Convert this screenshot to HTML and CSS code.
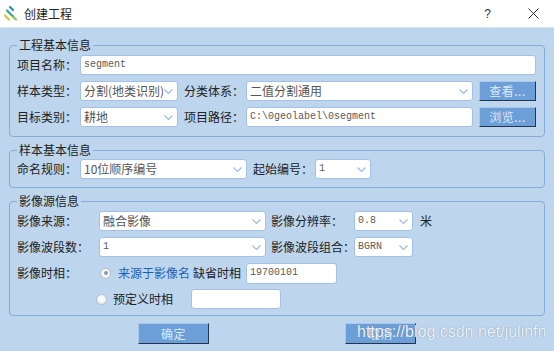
FILE: index.html
```html
<!DOCTYPE html>
<html lang="zh">
<head>
<meta charset="utf-8">
<link rel="stylesheet" href="styles.css">
</head>
<body>
<div class="titlebar">
  <svg class="logo" width="14" height="16" viewBox="0 0 14 16">
    <path d="M6 1 L9 4" stroke="#2a8fb0" stroke-width="2.2" stroke-linecap="round"/>
    <path d="M3 4.5 L9.5 11" stroke="#35a88a" stroke-width="2.2" stroke-linecap="round"/>
    <path d="M1 9.5 L5 13.5" stroke="#d8c23a" stroke-width="2.2" stroke-linecap="round"/>
    <path d="M9 10.5 L12 13.5" stroke="#8cc04a" stroke-width="2" stroke-linecap="round"/>
  </svg>
  <span class="title">创建工程</span>
  <span class="help">?</span>
  <svg class="close" width="11" height="11" viewBox="0 0 11 11">
    <path d="M0.5 0.5 L10.5 10.5 M10.5 0.5 L0.5 10.5" stroke="#333" stroke-width="1"/>
  </svg>
</div>

<div class="main">
  <fieldset class="group g1">
    <legend>工程基本信息</legend>
    <div class="grid grid1">
      <span class="lab">项目名称：</span>
      <div class="field span4"><span class="mono">segment</span></div>

      <span class="lab">样本类型：</span>
      <div class="field combo"><span>分割(地类识别)</span><svg class="chev" width="9" height="5" viewBox="0 0 9 5"><path d="M0.5 0.5 L4.5 4.5 L8.5 0.5" fill="none" stroke="#9cbde2" stroke-width="1.2"/></svg></div>
      <span class="lab lab2">分类体系：</span>
      <div class="field combo"><span>二值分割通用</span><svg class="chev" width="9" height="5" viewBox="0 0 9 5"><path d="M0.5 0.5 L4.5 4.5 L8.5 0.5" fill="none" stroke="#9cbde2" stroke-width="1.2"/></svg></div>
      <div class="btncell"><div class="btn">查看...</div></div>

      <span class="lab">目标类别：</span>
      <div class="field combo"><span>耕地</span><svg class="chev" width="9" height="5" viewBox="0 0 9 5"><path d="M0.5 0.5 L4.5 4.5 L8.5 0.5" fill="none" stroke="#9cbde2" stroke-width="1.2"/></svg></div>
      <span class="lab lab2">项目路径：</span>
      <div class="field"><span class="mono">C:\0geolabel\0segment</span></div>
      <div class="btncell"><div class="btn">浏览...</div></div>
    </div>
  </fieldset>

  <fieldset class="group g2">
    <legend>样本基本信息</legend>
    <div class="grid grid2">
      <span class="lab">命名规则：</span>
      <div class="field combo"><span>10位顺序编号</span><svg class="chev" width="9" height="5" viewBox="0 0 9 5"><path d="M0.5 0.5 L4.5 4.5 L8.5 0.5" fill="none" stroke="#9cbde2" stroke-width="1.2"/></svg></div>
      <span class="lab lab2">起始编号：</span>
      <div class="field combo"><span class="mono">1</span><svg class="chev" width="9" height="5" viewBox="0 0 9 5"><path d="M0.5 0.5 L4.5 4.5 L8.5 0.5" fill="none" stroke="#9cbde2" stroke-width="1.2"/></svg></div>
    </div>
  </fieldset>

  <fieldset class="group g3">
    <legend>影像源信息</legend>
    <div class="grid grid3">
      <span class="lab">影像来源：</span>
      <div class="field combo"><span>融合影像</span><svg class="chev" width="9" height="5" viewBox="0 0 9 5"><path d="M0.5 0.5 L4.5 4.5 L8.5 0.5" fill="none" stroke="#9cbde2" stroke-width="1.2"/></svg></div>
      <span class="lab lab3">影像分辨率：</span>
      <div class="field combo"><span class="mono">0.8</span><svg class="chev" width="9" height="5" viewBox="0 0 9 5"><path d="M0.5 0.5 L4.5 4.5 L8.5 0.5" fill="none" stroke="#9cbde2" stroke-width="1.2"/></svg></div>
      <span class="lab unit">米</span>

      <span class="lab">影像波段数：</span>
      <div class="field combo"><span class="mono">1</span><svg class="chev" width="9" height="5" viewBox="0 0 9 5"><path d="M0.5 0.5 L4.5 4.5 L8.5 0.5" fill="none" stroke="#9cbde2" stroke-width="1.2"/></svg></div>
      <span class="lab lab3">影像波段组合：</span>
      <div class="field combo"><span class="mono">BGRN</span><svg class="chev" width="9" height="5" viewBox="0 0 9 5"><path d="M0.5 0.5 L4.5 4.5 L8.5 0.5" fill="none" stroke="#9cbde2" stroke-width="1.2"/></svg></div>
      <span></span>

      <span class="lab">影像时相：</span>
      <div class="radiorow r1">
        <span class="radio checked"></span>
        <span class="rtext blue">来源于影像名</span>
        <span class="lab deflab">缺省时相</span>
        <div class="field datein"><span class="mono">19700101</span></div>
      </div>

      <span></span>
      <div class="radiorow r2">
        <span class="radio"></span>
        <span class="rtext">预定义时相</span>
        <div class="field predef"></div>
      </div>
    </div>
  </fieldset>

  <div class="actions">
    <div class="btn big">确定</div>
    <div class="btn big">取消</div>
  </div>
</div>

<div class="watermark">https://blog.csdn.net/julinfn</div>
</body>
</html>
```

FILE: styles.css
```css
* { box-sizing: border-box; }

body {
  margin: 0;
  width: 554px;
  height: 351px;
  overflow: hidden;
  position: relative;
  background: #bdd6ee;
  font-family: "Noto Sans CJK SC", "Liberation Sans", sans-serif;
  font-size: 12px;
  line-height: 14px;
  color: #222;
}

.titlebar {
  height: 28px;
  background: #fff;
  border-bottom: 1px solid #d4e4f4;
  display: flex;
  align-items: center;
  padding-left: 4px;
}

.logo { margin-top: 1px; }

.title {
  margin-left: 6px;
  font-size: 12px;
  color: #222;
}

.help {
  margin-left: auto;
  font-family: "Liberation Sans", sans-serif;
  font-size: 12px;
  color: #333;
}

.close {
  margin-left: 37px;
  margin-right: 15px;
}

.main {
  padding: 0 9px;
}

.group {
  margin: 0;
  border: 1px solid #86acd9;
  border-radius: 4px;
  padding: 3px 8px 9px 7px;
  min-width: 0;
}

.group legend {
  padding: 0 2px;
  line-height: 14px;
  font-size: 12px;
  color: #222;
}

.g1 { margin-top: 10px; }
.g2 { margin-top: 6px; padding-top: 2px; padding-bottom: 8px; }
.g3 { margin-top: 6px; padding-top: 3px; padding-bottom: 6px; }

.grid {
  display: grid;
  grid-auto-rows: 20px;
  row-gap: 6px;
  align-items: center;
}

.grid1 { grid-template-columns: 63px 98px 68px 227px 63px; }
.grid2 { grid-template-columns: 63px 167px 68px 56px; }
.grid3 { grid-template-columns: 82px 167px 88px 59px 1fr; }

.span4 { grid-column: 2 / 6; }

.lab { white-space: nowrap; color: #222; }
.lab2 { padding-left: 6px; }
.lab3 { padding-left: 5px; }
.unit { padding-left: 7px; }

.field {
  height: 20px;
  background: #fff;
  border: 1px solid #a3c1e4;
  border-radius: 3px;
  display: flex;
  align-items: center;
  padding-left: 3px;
  color: #555;
  white-space: nowrap;
  overflow: hidden;
}

.combo { padding-right: 4px; }
.combo .chev { margin-left: auto; flex: none; }

.mono {
  font-family: "Liberation Mono", monospace;
  font-size: 10px;
  color: #5a5a5a;
}

.btncell {
  padding-left: 6px;
  height: 20px;
}

.btn {
  height: 20px;
  background: #6c9fd8;
  border-top: 1px solid #a9c8ec;
  border-left: 1px solid #a9c8ec;
  border-right: 1px solid #24364f;
  border-bottom: 1px solid #24364f;
  color: #dde9f7;
  display: flex;
  align-items: center;
  justify-content: center;
  letter-spacing: 0.5px;
}

.radiorow {
  grid-column: 2 / 6;
  display: flex;
  align-items: center;
  height: 20px;
}

.r1 { margin-left: 1px; }
.r2 { margin-left: -3px; }

.radio {
  width: 11px;
  height: 11px;
  border-radius: 50%;
  border: 1px solid #b7bfca;
  background: radial-gradient(circle at 50% 40%, #ffffff 0%, #f2f4f7 55%, #d9dee6 100%);
  display: flex;
  align-items: center;
  justify-content: center;
  flex: none;
}

.radio.checked::after {
  content: "";
  width: 4px;
  height: 4px;
  border-radius: 50%;
  background: #8d99a8;
}

.r1 .rtext { margin-left: 7px; }
.r2 .rtext { margin-left: 6px; }

.blue { color: #1d5fb4; }

.deflab { margin-left: 3px; }

.datein {
  margin-left: 5px;
  width: 91px;
  height: 21px;
}

.predef {
  margin-left: 18px;
  width: 90px;
}

.actions {
  display: flex;
  margin-top: 7px;
  padding-left: 129px;
  gap: 136px;
}

.btn.big {
  width: 71px;
  height: 21px;
}

.watermark {
  position: absolute;
  left: 357px;
  top: 323px;
  font-family: "Liberation Sans", sans-serif;
  font-size: 16px;
  line-height: 18px;
  color: #eef3f9;
  text-shadow: 0 0 1px rgba(70, 85, 110, 0.7);
  white-space: nowrap;
}
```
